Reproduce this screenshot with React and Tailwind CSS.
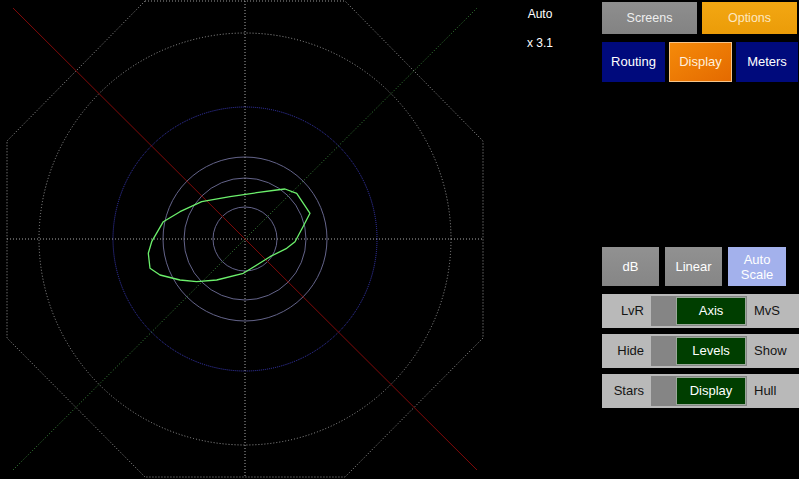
const HULL = [
  [285, 189], [296.7, 193.3], [310, 213.3], [303, 226.7], [295, 241.7], [286.7, 248.3],
  [270, 256.7], [243.3, 273.3], [216.7, 280], [196.7, 281.7], [180, 280], [160, 275],
  [150, 268.3], [148.3, 253.3], [151.7, 241.7], [163.3, 221.7], [180, 211.7], [201.7, 201.7],
  [230, 196.7], [256.7, 192.7], [276.7, 190],
];

const CX = 245;
const CY = 239;

function Scope() {
  const octagon = '145,1 345,1 483,141 483,338 345,477 145,477 7,338 7,141';
  return (
    <svg width="490" height="479" viewBox="0 0 490 479" className="block">
      <polygon points={octagon} fill="none" stroke="#9a9a9a" strokeWidth="1" strokeDasharray="1 2" />
      <circle cx={CX} cy={CY} r="206" fill="none" stroke="#9a9a9a" strokeWidth="1" strokeDasharray="1 2" />
      <circle cx={CX} cy={CY} r="132" fill="none" stroke="#3a3ab8" strokeWidth="1" strokeDasharray="1 1" />
      <circle cx={CX} cy={CY} r="82" fill="none" stroke="#64648a" strokeWidth="1" />
      <circle cx={CX} cy={CY} r="61" fill="none" stroke="#64648a" strokeWidth="1" />
      <circle cx={CX} cy={CY} r="32" fill="none" stroke="#64648a" strokeWidth="1" />
      <line x1="7" y1={CY} x2="483" y2={CY} stroke="#a8a8a8" strokeWidth="1" strokeDasharray="1 2" />
      <line x1={CX} y1="1" x2={CX} y2="477" stroke="#a8a8a8" strokeWidth="1" strokeDasharray="1 2" />
      <line x1="13" y1="8" x2="477" y2="470" stroke="#800a0a" strokeWidth="1" />
      <line x1="13" y1="470" x2="477" y2="8" stroke="#3c8a3c" strokeWidth="1" strokeDasharray="1 2" />
      <polygon
        points={HULL.map((p) => p.join(',')).join(' ')}
        fill="none"
        stroke="#6cf06c"
        strokeWidth="1.3"
        strokeLinejoin="round"
      />
    </svg>
  );
}

function ToggleRow({ left, knob, right }) {
  return (
    <div className="flex h-[34px] items-center bg-[#b9b9b9] text-[13px] text-[#141414]">
      <div className="w-[49px] pr-[7px] text-right">{left}</div>
      <div className="flex h-[30px] w-[96px] bg-[#858585]">
        <div className="w-[24px]" />
        <div className="m-[1px] flex flex-1 items-center justify-center border border-[#9aa89a] bg-[#003e00] text-white">
          {knob}
        </div>
      </div>
      <div className="flex-1 pl-[7px]">{right}</div>
    </div>
  );
}

export default function App() {
  return (
    <div
      className="flex h-[479px] w-[799px] overflow-hidden bg-black"
      style={{ fontFamily: '"Liberation Sans", Arial, sans-serif' }}
    >
      <Scope />

      <div className="flex w-[100px] flex-col items-center pt-[7px] text-[12px] text-white">
        <div className="h-[29px] leading-[14px]">Auto</div>
        <div className="leading-[14px]">x 3.1</div>
      </div>

      <div className="ml-[12px] flex w-[197px] flex-col pt-[2px]">
        <div className="flex gap-[5px]">
          <div className="flex h-[32px] w-[95px] items-center justify-center bg-gradient-to-b from-[#8e8e8e] to-[#838383] text-[12.5px] text-[#eee]">
            Screens
          </div>
          <div className="flex h-[32px] w-[95px] items-center justify-center bg-gradient-to-b from-[#f3a712] to-[#eb9c08] text-[12.5px] text-[#fde8c0]">
            Options
          </div>
        </div>

        <div className="mt-[8px] flex gap-[4px]">
          <div className="flex h-[40px] w-[63px] items-center justify-center bg-[#000a7c] text-[13px] text-white">
            Routing
          </div>
          <div className="flex h-[40px] w-[63px] items-center justify-center border border-[#f6c48a] bg-gradient-to-br from-[#f58a0a] to-[#e46a00] text-[13px] text-[#fff0dc]">
            Display
          </div>
          <div className="flex h-[40px] w-[62px] items-center justify-center bg-[#000a7c] text-[13px] text-white">
            Meters
          </div>
        </div>

        <div className="mt-[165px] flex gap-[6px]">
          <div className="flex h-[39px] w-[57px] items-center justify-center bg-gradient-to-b from-[#919191] to-[#868686] text-[13px] text-white">
            dB
          </div>
          <div className="flex h-[39px] w-[57px] items-center justify-center bg-gradient-to-b from-[#919191] to-[#868686] text-[13px] text-white">
            Linear
          </div>
          <div className="flex h-[39px] w-[58px] flex-col items-center justify-center bg-[#a3b1ec] text-[13px] leading-[15px] text-white">
            <span>Auto</span>
            <span>Scale</span>
          </div>
        </div>

        <div className="mt-[8px] flex flex-col gap-[6px]">
          <ToggleRow left="LvR" knob="Axis" right="MvS" />
          <ToggleRow left="Hide" knob="Levels" right="Show" />
          <ToggleRow left="Stars" knob="Display" right="Hull" />
        </div>
      </div>
    </div>
  );
}
